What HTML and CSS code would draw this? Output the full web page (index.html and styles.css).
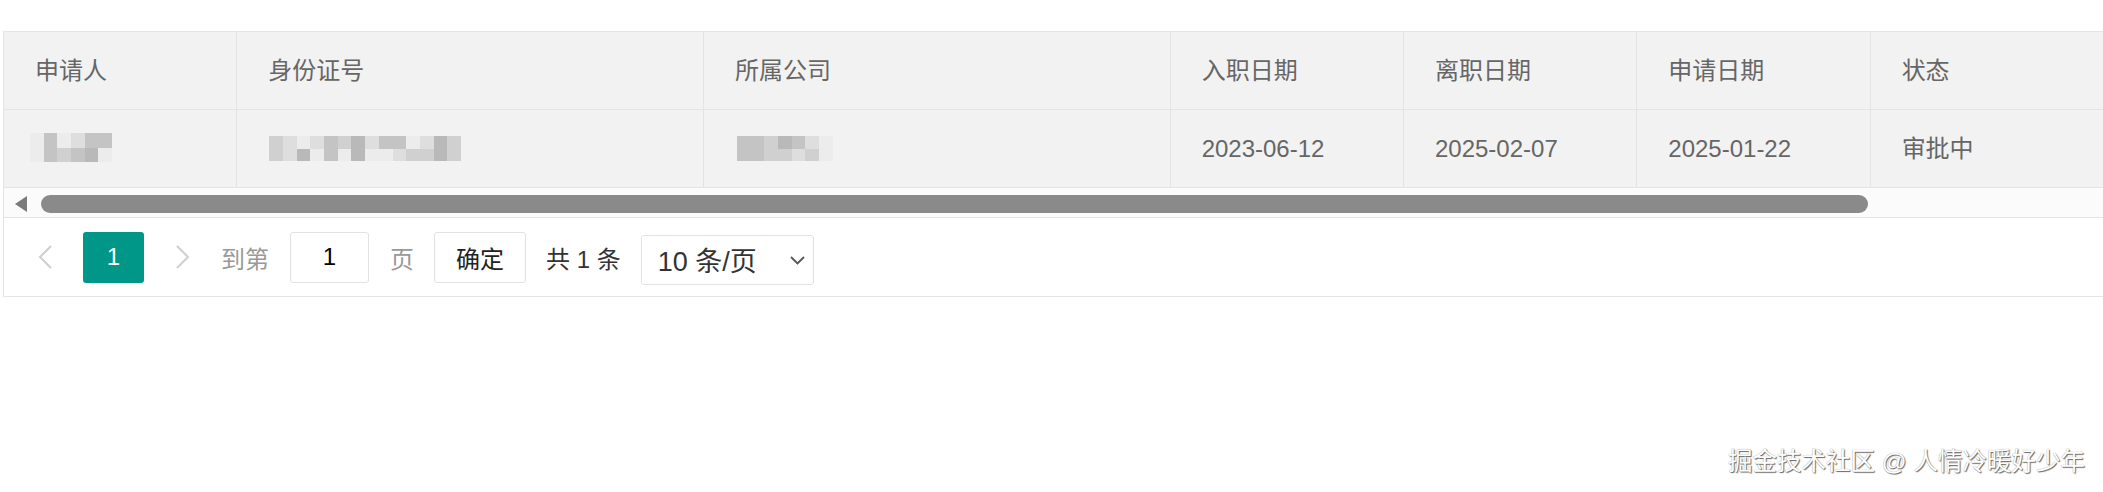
FILE: index.html
```html
<!DOCTYPE html>
<html lang="zh-CN">
<head>
<meta charset="utf-8">
<title>离职申请</title>
<link rel="stylesheet" href="styles.css">
</head>
<body>
<div class="page">
  <div class="table-view">
    <div class="table-box">
      <div class="row head">
        <div class="cell">申请人</div>
        <div class="cell">身份证号</div>
        <div class="cell">所属公司</div>
        <div class="cell">入职日期</div>
        <div class="cell">离职日期</div>
        <div class="cell">申请日期</div>
        <div class="cell">状态</div>
        <div class="cell"></div>
      </div>
      <div class="row body">
        <div class="cell">
          <span class="mosaic m-name">
            <i class="m0"></i><i class="m0"></i>
            <i class="m3"></i><i class="m3"></i>
            <i class="m0"></i><i class="m2"></i>
            <i class="m1"></i><i class="m3"></i>
            <i class="m3"></i><i class="m4"></i>
            <i class="m3"></i><i class="m0"></i>
          </span>
        </div>
        <div class="cell">
          <span class="mosaic m-id">
            <i class="m2"></i><i class="m2"></i>
            <i class="m1"></i><i class="m1"></i>
            <i class="m0"></i><i class="m4"></i>
            <i class="m1"></i><i class="m0"></i>
            <i class="m3"></i><i class="m3"></i>
            <i class="m2"></i><i class="m0"></i>
            <i class="m4"></i><i class="m4"></i>
            <i class="m1"></i><i class="m0"></i>
            <i class="m3"></i><i class="m0"></i>
            <i class="m3"></i><i class="m1"></i>
            <i class="m0"></i><i class="m2"></i>
            <i class="m1"></i><i class="m2"></i>
            <i class="m4"></i><i class="m4"></i>
            <i class="m2"></i><i class="m2"></i>
          </span>
        </div>
        <div class="cell">
          <span class="mosaic m-co">
            <i class="m3"></i><i class="m3"></i>
            <i class="m3"></i><i class="m3"></i>
            <i class="m2"></i><i class="m2"></i>
            <i class="m4"></i><i class="m2"></i>
            <i class="m3"></i><i class="m1"></i>
            <i class="m1"></i><i class="m2"></i>
            <i class="m0"></i><i class="m0"></i>
          </span>
        </div>
        <div class="cell">2023-06-12</div>
        <div class="cell">2025-02-07</div>
        <div class="cell">2025-01-22</div>
        <div class="cell">审批中</div>
        <div class="cell"></div>
      </div>
    </div>
    <div class="hscroll">
      <span class="arrow-left"></span>
      <span class="thumb"></span>
    </div>
    <div class="pager">
      <span class="nav prev">
        <svg width="15" height="24" viewBox="0 0 15 24"><polyline points="13,1 2,12 13,23" fill="none" stroke="#cfcfcf" stroke-width="2"/></svg>
      </span>
      <span class="cur">1</span>
      <span class="nav next">
        <svg width="15" height="24" viewBox="0 0 15 24"><polyline points="2,1 13,12 2,23" fill="none" stroke="#cfcfcf" stroke-width="2"/></svg>
      </span>
      <span class="skip-label">到第</span>
      <input class="skip-input" type="text" value="1">
      <span class="skip-label page-word">页</span>
      <button class="skip-btn" type="button">确定</button>
      <span class="count">共 1 条</span>
      <span class="limits">
        <span class="limits-text">10 条/页</span>
        <svg width="15" height="9" viewBox="0 0 15 9"><polyline points="1,1 7.5,7.5 14,1" fill="none" stroke="#555" stroke-width="1.8"/></svg>
      </span>
    </div>
  </div>
</div>
<div class="watermark">掘金技术社区 @ 人情冷暖好少年</div>
</body>
</html>
```
FILE: styles.css
```css
html, body {
  margin: 0;
  padding: 0;
  overflow: hidden;
  background: #fff;
}
body {
  font-family: "Liberation Sans", "Noto Sans CJK SC", sans-serif;
  width: 2103px;
  height: 492px;
  position: relative;
}
.page {
  padding: 31px 0 0 3px;
}
.table-view {
  border: 1px solid #e4e4e4;
  border-right: none;
  overflow: hidden;
}
.table-box {
  overflow: hidden;
}
.row {
  display: grid;
  grid-template-columns: 233.33px 466.67px 466.67px 233.33px 233.33px 233.33px 233.33px 233.33px;
  width: 2566px;
  background: #f2f2f2;
}
.cell {
  box-sizing: border-box;
  height: 78px;
  border-right: 1px solid #e4e4e4;
  border-bottom: 1px solid #e4e4e4;
  padding: 0 31px;
  font-size: 24px;
  line-height: 77px;
  color: #666;
  white-space: nowrap;
  display: flex;
  align-items: center;
}
.mosaic {
  display: grid;
  grid-auto-flow: column;
  grid-template-rows: 1fr 1fr;
}
.mosaic i {
  display: block;
}
.m-name {
  margin-left: -5px;
  height: 29px;
  grid-auto-columns: 13.7px;
  margin-top: -2px;
}
.m-id {
  margin-left: 1px;
  height: 25px;
  grid-auto-columns: 13.7px;
}
.m-co {
  margin-left: 2px;
  height: 25px;
  grid-auto-columns: 13.7px;
}
.m0 { background: #ececec; }
.m1 { background: #dedede; }
.m2 { background: #d0d0d0; }
.m3 { background: #c4c4c4; }
.m4 { background: #b9b9b9; }

.hscroll {
  height: 29px;
  display: flex;
  align-items: center;
  padding-top: 3px;
  box-sizing: border-box;
  background: #fbfbfb;
}
.arrow-left {
  width: 0;
  height: 0;
  margin-left: 11px;
  border-right: 12px solid #7a7a7a;
  border-top: 8.5px solid transparent;
  border-bottom: 8.5px solid transparent;
}
.thumb {
  margin-left: 14px;
  width: 1827px;
  height: 18px;
  border-radius: 9px;
  background: #8a8a8a;
}

.pager {
  border-top: 1px solid #e4e4e4;
  height: 79px;
  box-sizing: border-box;
  display: flex;
  align-items: center;
  padding-left: 34px;
  background: #fff;
  font-size: 24px;
}
.nav {
  display: flex;
  width: 15px;
  height: 24px;
}
.cur {
  margin-left: 30px;
  width: 61px;
  height: 51px;
  border-radius: 3px;
  background: #009688;
  color: #fff;
  display: flex;
  align-items: center;
  justify-content: center;
}
.next {
  margin-left: 31px;
}
.skip-label {
  margin-left: 31px;
  color: #999;
}
.skip-input {
  margin-left: 21px;
  width: 79px;
  height: 51px;
  box-sizing: border-box;
  border: 1px solid #e2e2e2;
  border-radius: 3px;
  text-align: center;
  font: inherit;
  font-size: 24px;
  color: #000;
  padding: 0;
  outline: none;
}
.page-word {
  margin-left: 21px;
}
.skip-btn {
  margin-left: 20px;
  width: 92px;
  height: 51px;
  box-sizing: border-box;
  border: 1px solid #e2e2e2;
  border-radius: 3px;
  background: #fff;
  font: inherit;
  font-size: 24px;
  color: #222;
  padding: 0;
}
.count {
  margin-left: 20px;
  color: #333;
}
.limits {
  margin-left: 20px;
  margin-top: 5px;
  width: 173px;
  height: 50px;
  box-sizing: border-box;
  border: 1px solid #e2e2e2;
  border-radius: 3px;
  display: flex;
  align-items: center;
  padding-left: 16px;
  padding-right: 8px;
  justify-content: space-between;
  color: #333;
  font-size: 27px;
}
.limits svg {
  margin-top: 2px;
}
.watermark {
  position: absolute;
  right: 18px;
  top: 449px;
  font-family: "Liberation Sans", "Noto Sans CJK SC", sans-serif;
  font-size: 24.5px;
  line-height: 25px;
  color: #fff;
  white-space: nowrap;
  text-shadow: 1px 1px 1px #666, 0 0 1px #888;
}
```
